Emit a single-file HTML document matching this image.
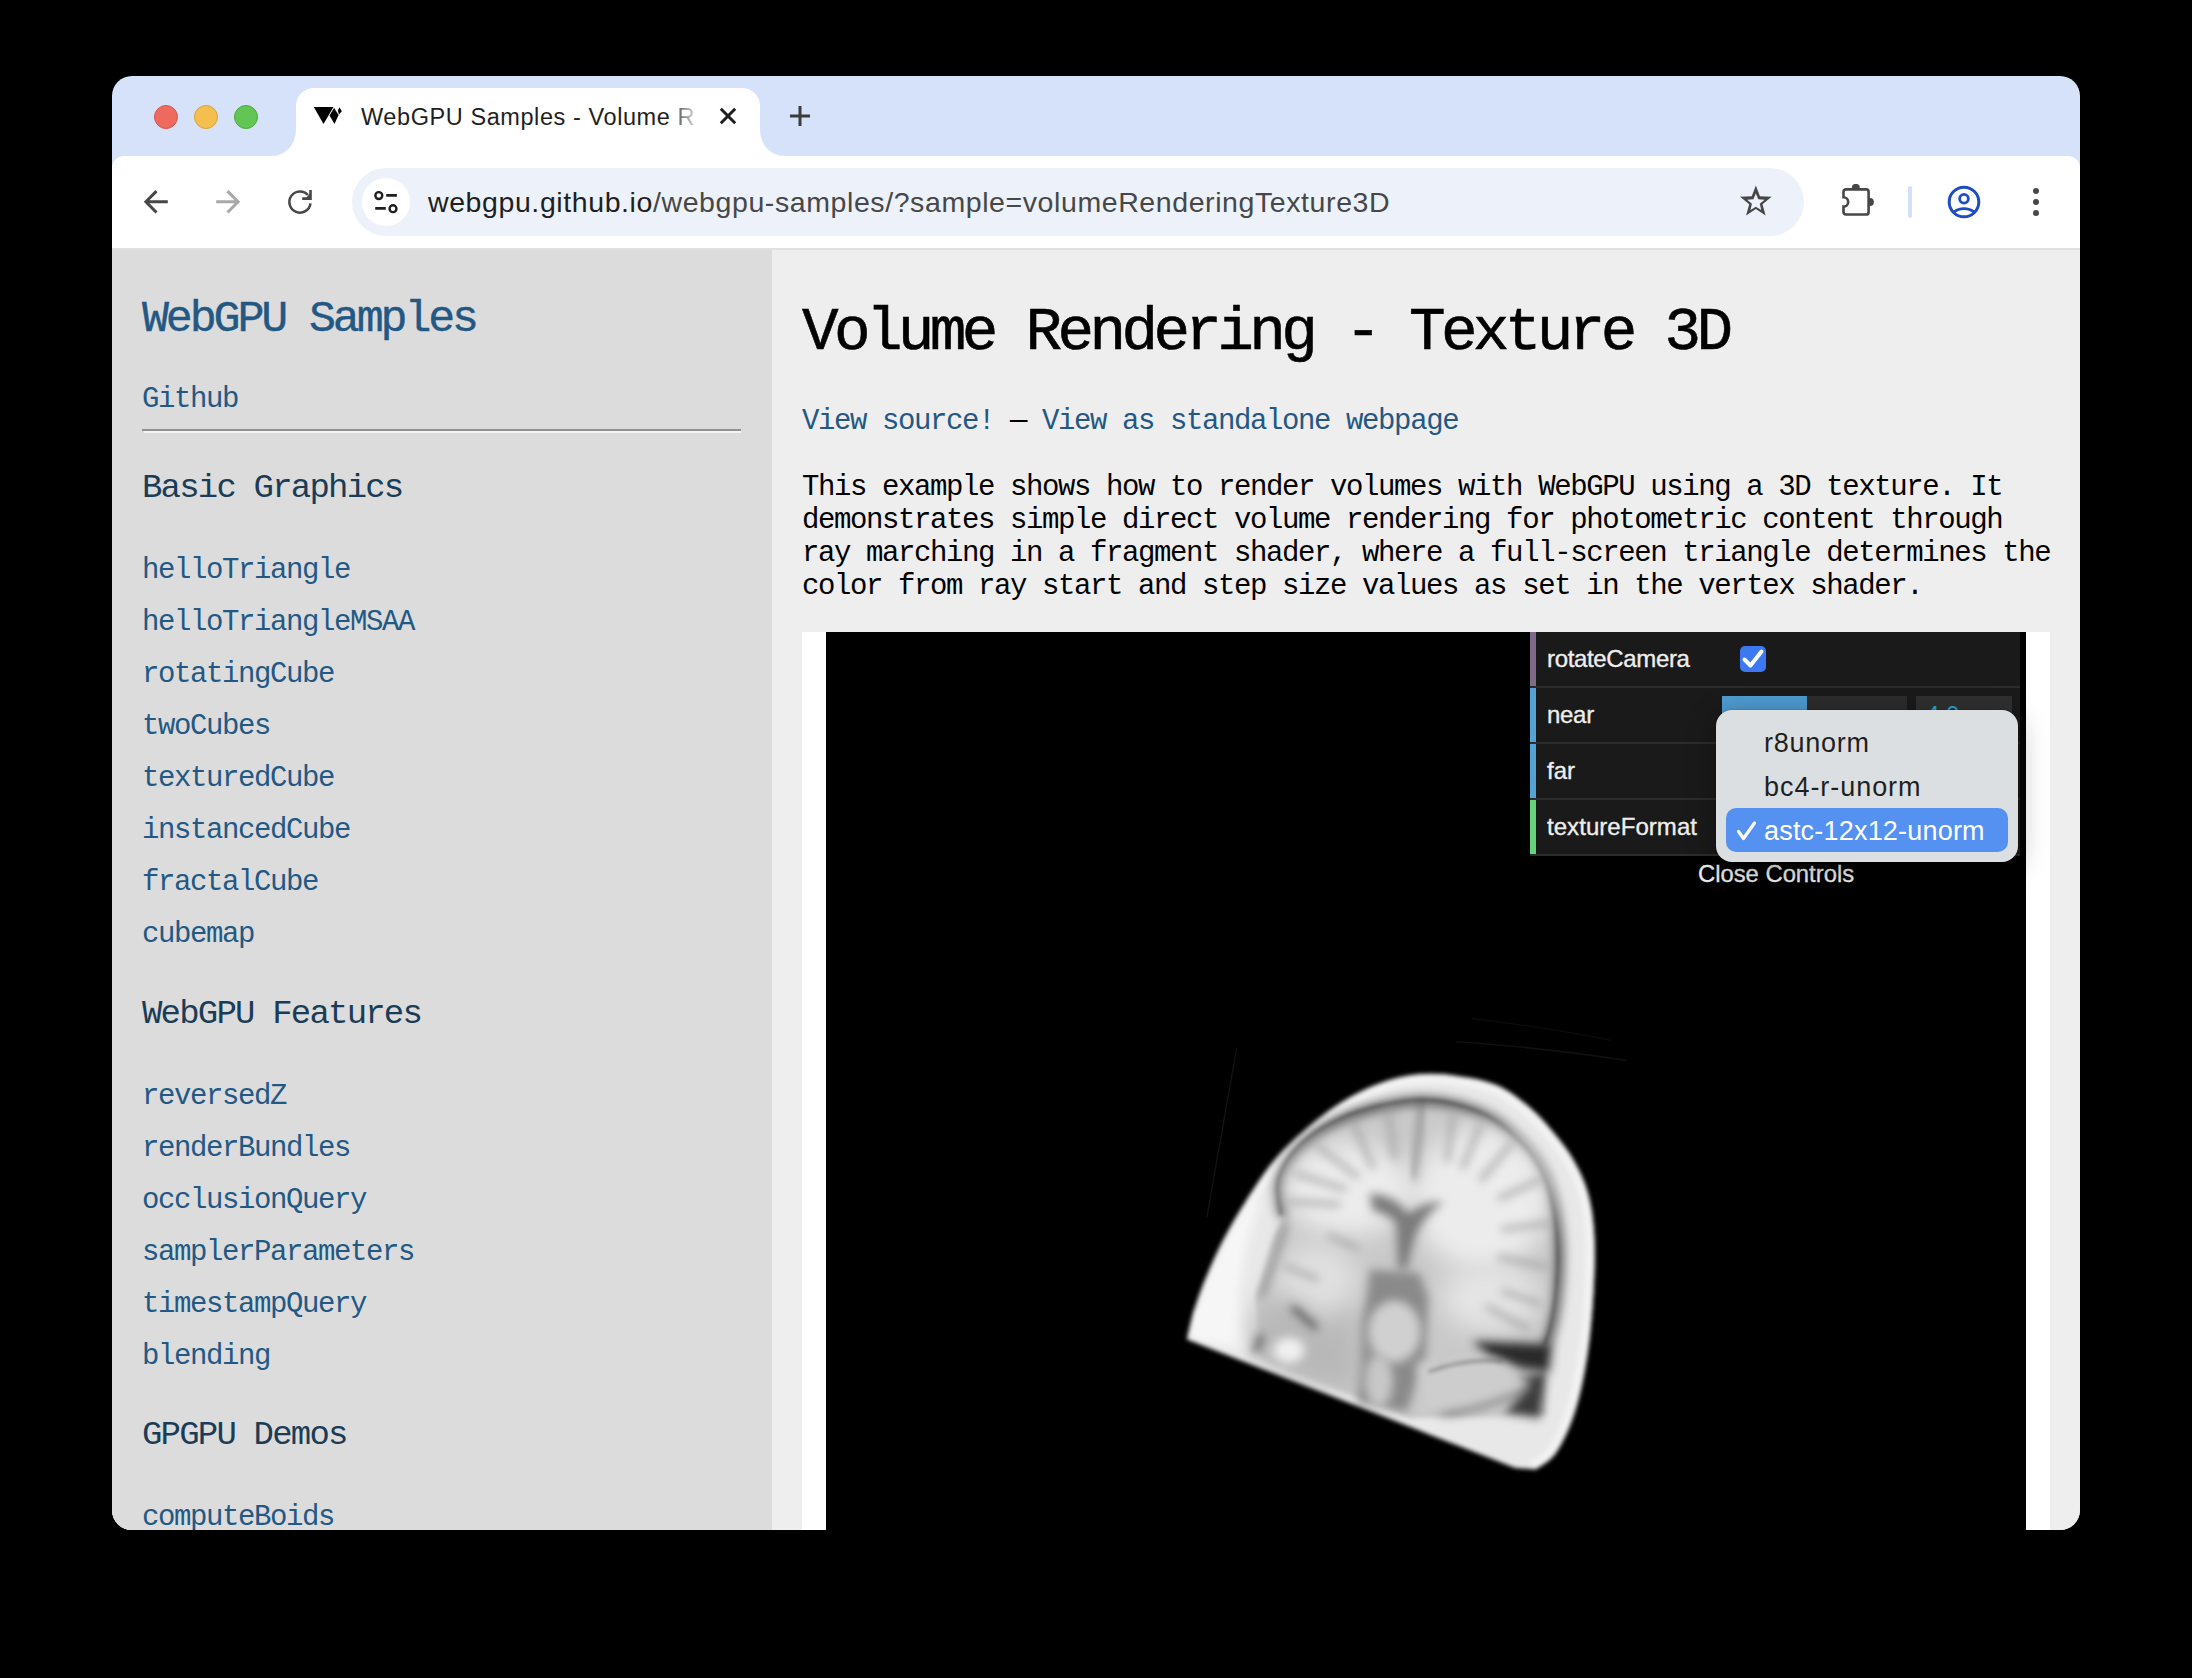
<!DOCTYPE html>
<html><head><meta charset="utf-8">
<style>
*{box-sizing:border-box;margin:0;padding:0}
html,body{width:2192px;height:1678px;background:#000;overflow:hidden;font-family:"Liberation Sans",sans-serif}
.abs{position:absolute}
#win{position:absolute;left:112px;top:76px;width:1968px;height:1454px;border-radius:20px;overflow:hidden;background:#d6e2fa}
.tl{position:absolute;top:29px;width:24px;height:24px;border-radius:50%}
#tab{position:absolute;left:184px;top:12px;width:464px;height:68px;background:#fff;border-radius:18px 18px 0 0}
.foot{position:absolute;top:64px;width:16px;height:16px;overflow:hidden}
#toolbar{position:absolute;left:0;top:80px;width:1968px;height:92px;background:#fff;border-radius:12px 12px 0 0}
#sep{position:absolute;left:0;top:172px;width:1968px;height:2px;background:#dfe1de}
#content{position:absolute;left:0;top:174px;width:1968px;height:1280px;background:#eee;overflow:hidden}
#side{position:absolute;left:0;top:0;width:660px;height:1280px;background:#dcdcdc}
.mono{font-family:"Liberation Mono",monospace}
.link{color:#235a88}
.t{position:absolute;white-space:nowrap}
</style></head><body>
<div id="win">
  <div class="tl" style="left:42px;background:#ee6a5f;border:1px solid #d9554a"></div>
  <div class="tl" style="left:82px;background:#f5bf4f;border:1px solid #d9a33a"></div>
  <div class="tl" style="left:122px;background:#62c554;border:1px solid #4ea83f"></div>
  <div id="tab"></div>
  <svg class="abs" style="left:200px;top:28px" width="34" height="24" viewBox="0 0 34 24">
    <polygon points="1.8,3.1 21.5,3.1 11.5,20" fill="#000"/>
    <polygon points="22.1,3.9 26.6,11.1 22.5,20 17.5,11.5" fill="#000"/>
    <polygon points="27.4,3.3 29.9,7.2 26.9,10.5 25.9,6.5" fill="#000"/>
  </svg>
  <div class="abs" style="left:249px;top:23.5px;width:333px;height:34px;overflow:hidden;white-space:nowrap;font-size:23.5px;letter-spacing:0.58px;color:#1f1f1f;line-height:34px">WebGPU Samples - Volume Rendering</div>
  <div class="abs" style="left:556px;top:20px;width:28px;height:40px;background:linear-gradient(90deg,rgba(255,255,255,0),rgba(255,255,255,0.85) 100%)"></div>
  <svg class="abs" style="left:600px;top:24px" width="32" height="32" viewBox="0 0 32 32"><path d="M8.8 8.8L23.2 23.2M23.2 8.8L8.8 23.2" stroke="#1f1f1f" stroke-width="3"/></svg>
  <svg class="abs" style="left:672px;top:24px" width="32" height="32" viewBox="0 0 32 32"><path d="M16 6V26M6 16H26" stroke="#3c3c3c" stroke-width="3"/></svg>

  <svg class="abs" style="left:160px;top:54px" width="24" height="26" viewBox="0 0 24 26"><path d="M24 0L24 26L0 26A24 26 0 0 0 24 0Z" fill="#fff"/></svg>
  <svg class="abs" style="left:648px;top:54px" width="24" height="26" viewBox="0 0 24 26"><path d="M0 0L0 26L24 26A24 26 0 0 1 0 0Z" fill="#fff"/></svg>
  <div id="toolbar"></div>
  <svg class="abs" style="left:26px;top:108px" width="36" height="36" viewBox="0 0 36 36"><path d="M29.8 17.8H9M18.5 7.1L7.9 17.8L18.5 28.5" fill="none" stroke="#474747" stroke-width="3"/></svg>
  <svg class="abs" style="left:98px;top:108px" width="36" height="36" viewBox="0 0 36 36"><path d="M6.2 17.8H27M17.5 7.1L28.1 17.8L17.5 28.5" fill="none" stroke="#a8a8a8" stroke-width="3"/></svg>
  <svg class="abs" style="left:170px;top:108px" width="36" height="36" viewBox="0 0 36 36"><path d="M26 11.05A10.6 10.6 0 1 0 28.5 19.3" fill="none" stroke="#474747" stroke-width="2.5"/><path d="M27.2 6H29.8V15.9H20.2V13.3H24.6L27.2 10.6Z" fill="#474747"/></svg>
  <div class="abs" style="left:240px;top:92px;width:1452px;height:68px;border-radius:34px;background:#edf2fa"></div>
  <div class="abs" style="left:250px;top:102px;width:48px;height:48px;border-radius:50%;background:#fff"></div>
  <svg class="abs" style="left:256px;top:108px" width="36" height="36" viewBox="0 0 36 36">
    <circle cx="10.8" cy="11.6" r="3.45" fill="none" stroke="#1f1f1f" stroke-width="2.4"/>
    <path d="M18.2 11.4H28.9" stroke="#1f1f1f" stroke-width="2.9"/>
    <circle cx="25" cy="24.7" r="3.45" fill="none" stroke="#1f1f1f" stroke-width="2.4"/>
    <path d="M7.2 24.4H17.8" stroke="#1f1f1f" stroke-width="2.9"/>
  </svg>
  <div class="abs" style="left:316px;top:108px;white-space:nowrap;font-size:28.5px;letter-spacing:0.59px;color:#1f1f1f;line-height:36px">webgpu.github.io<span style="color:#474747">/webgpu-samples/?sample=volumeRenderingTexture3D</span></div>
  <svg class="abs" style="left:1625px;top:107px" width="36" height="36" viewBox="0 0 36 36"><path fill-rule="evenodd" d="M18.85 2.40 L22.96 13.34 L34.64 13.87 L25.51 21.16 L28.61 32.43 L18.85 26.00 L9.09 32.43 L12.19 21.16 L3.06 13.87 L14.74 13.34Z M18.85 10.40 L21.26 16.28 L27.60 16.76 L22.75 20.87 L24.26 27.04 L18.85 23.70 L13.44 27.04 L14.95 20.87 L10.10 16.76 L16.44 16.28Z" fill="#474747"/></svg>
  <svg class="abs" style="left:1727px;top:108px" width="36" height="36" viewBox="0 0 36 36"><path d="M4.5 13.2V7.9Q4.5 5.4 7 5.4H27.1Q29.6 5.4 29.6 7.9V27.9Q29.6 30.5 27.1 30.5H7Q4.5 30.5 4.5 28V22.6A4.7 4.7 0 0 0 4.5 13.2Z" fill="none" stroke="#474747" stroke-width="2.6"/><path d="M12.9 5.4V3.8A3.95 3.95 0 0 1 20.8 3.8V5.4Z" fill="#474747"/><path d="M29.6 13.9H30.9A4 4 0 0 1 30.9 21.9H29.6Z" fill="#474747"/></svg>
  <div class="abs" style="left:1796px;top:110px;width:4px;height:32px;border-radius:2px;background:#d3e0fa"></div>
  <svg class="abs" style="left:1834px;top:108px" width="36" height="36" viewBox="0 0 36 36">
    <circle cx="18" cy="18" r="14.8" fill="none" stroke="#1d4cc3" stroke-width="3"/>
    <circle cx="18" cy="14.8" r="4.35" fill="none" stroke="#1d4cc3" stroke-width="2.8"/>
    <path d="M8 28A13.5 10 0 0 1 28 28" fill="none" stroke="#1d4cc3" stroke-width="2.8"/>
  </svg>
  <svg class="abs" style="left:1906px;top:108px" width="36" height="36" viewBox="0 0 36 36"><circle cx="18" cy="7" r="3" fill="#474747"/><circle cx="18" cy="18" r="3" fill="#474747"/><circle cx="18" cy="29" r="3" fill="#474747"/></svg>

  <div id="sep"></div>
  <div id="content">
    <div id="side"></div>
<!--CONTENT-->
<div class="t mono" style="left:30px;top:47.03px;font-size:45px;line-height:45px;letter-spacing:-3.15px;color:#245884;-webkit-text-stroke:0.4px #245884;">WebGPU Samples</div>
<div class="t mono" style="left:30px;top:134.78px;font-size:29px;line-height:29px;letter-spacing:-1.4px;color:#245884;">Github</div>
<div class="abs" style="left:30px;top:179px;width:599px;height:2px;background:#929292"></div>
<div class="abs" style="left:32px;top:181px;width:597px;height:2px;background:#f4f4f4"></div>
<div class="t mono" style="left:30px;top:220.95px;font-size:34px;line-height:34px;letter-spacing:-1.8px;color:#1b3c56;">Basic Graphics</div>
<div class="t mono" style="left:30px;top:305.78px;font-size:29px;line-height:29px;letter-spacing:-1.4px;color:#245884;">helloTriangle</div>
<div class="t mono" style="left:30px;top:357.78px;font-size:29px;line-height:29px;letter-spacing:-1.4px;color:#245884;">helloTriangleMSAA</div>
<div class="t mono" style="left:30px;top:409.78px;font-size:29px;line-height:29px;letter-spacing:-1.4px;color:#245884;">rotatingCube</div>
<div class="t mono" style="left:30px;top:461.78px;font-size:29px;line-height:29px;letter-spacing:-1.4px;color:#245884;">twoCubes</div>
<div class="t mono" style="left:30px;top:513.78px;font-size:29px;line-height:29px;letter-spacing:-1.4px;color:#245884;">texturedCube</div>
<div class="t mono" style="left:30px;top:565.78px;font-size:29px;line-height:29px;letter-spacing:-1.4px;color:#245884;">instancedCube</div>
<div class="t mono" style="left:30px;top:617.78px;font-size:29px;line-height:29px;letter-spacing:-1.4px;color:#245884;">fractalCube</div>
<div class="t mono" style="left:30px;top:669.78px;font-size:29px;line-height:29px;letter-spacing:-1.4px;color:#245884;">cubemap</div>
<div class="t mono" style="left:30px;top:746.95px;font-size:34px;line-height:34px;letter-spacing:-1.8px;color:#1b3c56;">WebGPU Features</div>
<div class="t mono" style="left:30px;top:831.78px;font-size:29px;line-height:29px;letter-spacing:-1.4px;color:#245884;">reversedZ</div>
<div class="t mono" style="left:30px;top:883.78px;font-size:29px;line-height:29px;letter-spacing:-1.4px;color:#245884;">renderBundles</div>
<div class="t mono" style="left:30px;top:935.78px;font-size:29px;line-height:29px;letter-spacing:-1.4px;color:#245884;">occlusionQuery</div>
<div class="t mono" style="left:30px;top:987.78px;font-size:29px;line-height:29px;letter-spacing:-1.4px;color:#245884;">samplerParameters</div>
<div class="t mono" style="left:30px;top:1039.78px;font-size:29px;line-height:29px;letter-spacing:-1.4px;color:#245884;">timestampQuery</div>
<div class="t mono" style="left:30px;top:1091.78px;font-size:29px;line-height:29px;letter-spacing:-1.4px;color:#245884;">blending</div>
<div class="t mono" style="left:30px;top:1167.95px;font-size:34px;line-height:34px;letter-spacing:-1.8px;color:#1b3c56;">GPGPU Demos</div>
<div class="t mono" style="left:30px;top:1252.78px;font-size:29px;line-height:29px;letter-spacing:-1.4px;color:#245884;">computeBoids</div>
<div class="t mono" style="left:690px;top:52.27px;font-size:61px;line-height:61px;letter-spacing:-4.66px;color:#000;-webkit-text-stroke:0.6px #000;">Volume Rendering - Texture 3D</div>
<div class="t mono" style="left:690px;top:157.28px;font-size:29px;line-height:29px;letter-spacing:-1.4px;color:#000;"><span style="color:#245884">View source!</span> — <span style="color:#245884">View as standalone webpage</span></div>
<div class="t mono" style="left:690px;top:222.78px;font-size:29px;line-height:29px;letter-spacing:-1.4px;color:#000;">This example shows how to render volumes with WebGPU using a 3D texture. It</div>
<div class="t mono" style="left:690px;top:255.78px;font-size:29px;line-height:29px;letter-spacing:-1.4px;color:#000;">demonstrates simple direct volume rendering for photometric content through</div>
<div class="t mono" style="left:690px;top:288.78px;font-size:29px;line-height:29px;letter-spacing:-1.4px;color:#000;">ray marching in a fragment shader, where a full-screen triangle determines the</div>
<div class="t mono" style="left:690px;top:321.78px;font-size:29px;line-height:29px;letter-spacing:-1.4px;color:#000;">color from ray start and step size values as set in the vertex shader.</div>
<div class="abs" style="left:690px;top:382px;width:1248px;height:898px;background:#fff"></div>
<div class="abs" style="left:714px;top:382px;width:1200px;height:898px;background:#000"></div>
<div class="abs" style="left:1418px;top:382px;width:490px;height:54px;background:#1a1a1a"></div>
<div class="abs" style="left:1418px;top:436px;width:490px;height:2px;background:#2c2c2c"></div>
<div class="abs" style="left:1418px;top:382px;width:6px;height:54px;background:#806a8a"></div>
<div class="abs" style="left:1418px;top:438px;width:490px;height:54px;background:#1a1a1a"></div>
<div class="abs" style="left:1418px;top:492px;width:490px;height:2px;background:#2c2c2c"></div>
<div class="abs" style="left:1418px;top:438px;width:6px;height:54px;background:#55a2d6"></div>
<div class="abs" style="left:1418px;top:494px;width:490px;height:54px;background:#1a1a1a"></div>
<div class="abs" style="left:1418px;top:548px;width:490px;height:2px;background:#2c2c2c"></div>
<div class="abs" style="left:1418px;top:494px;width:6px;height:54px;background:#55a2d6"></div>
<div class="abs" style="left:1418px;top:550px;width:490px;height:54px;background:#1a1a1a"></div>
<div class="abs" style="left:1418px;top:604px;width:490px;height:2px;background:#2c2c2c"></div>
<div class="abs" style="left:1418px;top:550px;width:6px;height:54px;background:#66d27b"></div>
<div class="t" style="left:1435px;top:396.88px;font-size:24px;line-height:24px;letter-spacing:-0.35px;color:#eee;-webkit-text-stroke:0.35px #eee;">rotateCamera</div>
<div class="t" style="left:1435px;top:452.98px;font-size:24px;line-height:24px;letter-spacing:-0.3px;color:#eee;-webkit-text-stroke:0.35px #eee;">near</div>
<div class="t" style="left:1435px;top:508.68px;font-size:24px;line-height:24px;letter-spacing:0px;color:#eee;-webkit-text-stroke:0.35px #eee;">far</div>
<div class="t" style="left:1435px;top:565.18px;font-size:24px;line-height:24px;letter-spacing:0.05px;color:#eee;-webkit-text-stroke:0.35px #eee;">textureFormat</div>
<div class="abs" style="left:1628px;top:396px;width:26px;height:26px;background:#3b78f2;border-radius:5px"></div>
<svg class="abs" style="left:1628px;top:396px" width="26" height="26" viewBox="0 0 26 26"><path d="M4.5 13.5L10.5 19.5L21.5 5.5" fill="none" stroke="#fff" stroke-width="4" stroke-linecap="round" stroke-linejoin="round"/></svg>
<div class="abs" style="left:1610px;top:446px;width:185px;height:50px;background:#2c2c2c"></div>
<div class="abs" style="left:1610px;top:446px;width:85px;height:50px;background:#4e9bd0"></div>
<div class="abs" style="left:1804px;top:446px;width:96px;height:50px;background:#303030"></div>
<div class="t" style="left:1814px;top:453.18px;font-size:24px;line-height:24px;letter-spacing:0px;color:#2fa1d6;">4.0</div>
<div class="t" style="left:1586px;top:612.45px;font-size:23.8px;line-height:23.8px;letter-spacing:0px;color:#eee;-webkit-text-stroke:0.3px #eee;">Close Controls</div>
<div class="abs" style="left:1604px;top:460px;width:302px;height:152px;background:#dcdfe2;border-radius:16px;box-shadow:0 6px 28px rgba(0,0,0,0.35), 0 0 0 1px rgba(0,0,0,0.08)"></div>
<div class="abs" style="left:1614px;top:558px;width:282px;height:44px;background:#5591f0;border-radius:10px"></div>
<div class="t" style="left:1652px;top:480.14px;font-size:27px;line-height:27px;letter-spacing:0.75px;color:#1f1f1f;">r8unorm</div>
<div class="t" style="left:1652px;top:524.14px;font-size:27px;line-height:27px;letter-spacing:0.95px;color:#1f1f1f;">bc4-r-unorm</div>
<div class="t" style="left:1652px;top:568.14px;font-size:27px;line-height:27px;letter-spacing:0.2px;color:#fff;">astc-12x12-unorm</div>
<svg class="abs" style="left:1622px;top:568px" width="26" height="26" viewBox="0 0 26 26"><path d="M4.5 13.5L9.5 20.5L20.5 5" fill="none" stroke="#fff" stroke-width="3.2" stroke-linecap="round" stroke-linejoin="round"/></svg>
<svg class="abs" style="left:988px;top:750px" width="560" height="520" viewBox="0 0 1807 1678">
<defs>
<filter id="b1" x="-5%" y="-5%" width="110%" height="110%"><feGaussianBlur stdDeviation="7"/></filter>
<filter id="b2" x="-30%" y="-30%" width="160%" height="160%"><feGaussianBlur stdDeviation="14"/></filter>
<filter id="b3" x="-50%" y="-50%" width="200%" height="200%"><feGaussianBlur stdDeviation="40"/></filter>
<clipPath id="hc"><path d="M280 1095 L300 1010 C307 992 323 940 340 900 C357 860 378 812 400 770 C422 728 443 692 470 650 C497 608 528 558 560 520 C592 482 623 452 660 420 C697 388 740 355 780 330 C820 305 858 285 900 270 C942 255 988 244 1030 240 C1072 236 1108 239 1150 245 C1192 251 1241 258 1280 275 C1319 292 1354 319 1385 345 C1416 371 1441 401 1465 430 C1489 459 1512 488 1530 520 C1548 552 1564 585 1575 625 C1586 665 1592 706 1595 760 C1598 814 1596 885 1592 950 C1588 1015 1582 1087 1572 1150 C1562 1213 1549 1278 1532 1330 C1515 1382 1493 1429 1472 1460 C1451 1491 1416 1506 1405 1515 L1340 1510 Z"/></clipPath>
</defs>
<g filter="url(#b1)">
<path d="M280 1095 L300 1010 C307 992 323 940 340 900 C357 860 378 812 400 770 C422 728 443 692 470 650 C497 608 528 558 560 520 C592 482 623 452 660 420 C697 388 740 355 780 330 C820 305 858 285 900 270 C942 255 988 244 1030 240 C1072 236 1108 239 1150 245 C1192 251 1241 258 1280 275 C1319 292 1354 319 1385 345 C1416 371 1441 401 1465 430 C1489 459 1512 488 1530 520 C1548 552 1564 585 1575 625 C1586 665 1592 706 1595 760 C1598 814 1596 885 1592 950 C1588 1015 1582 1087 1572 1150 C1562 1213 1549 1278 1532 1330 C1515 1382 1493 1429 1472 1460 C1451 1491 1416 1506 1405 1515 L1340 1510 Z" fill="#e8e8e8"/>
<g clip-path="url(#hc)">
<path d="M470 650 C485 628 528 558 560 520 C592 482 623 452 660 420 C697 388 740 355 780 330 C820 305 858 285 900 270 C942 255 988 244 1030 240 C1072 236 1108 239 1150 245 C1192 251 1241 258 1280 275 C1319 292 1354 319 1385 345 C1416 371 1441 401 1465 430 C1489 459 1512 488 1530 520 C1548 552 1564 585 1575 625 C1586 665 1592 706 1595 760 C1598 814 1596 885 1592 950 C1588 1015 1582 1087 1572 1150 C1562 1213 1549 1278 1532 1330 C1515 1382 1493 1429 1472 1460 C1451 1491 1416 1506 1405 1515" fill="none" stroke="#f2f2f2" stroke-width="60"/>
<polygon points="280,1095 300,1010 340,900 400,770 470,650 520,640 470,800 450,950 460,1130" fill="#f6f6f6" filter="url(#b2)"/>
<path d="M590 700 C588 683 575 630 578 600 C581 570 593 546 610 520 C627 494 652 468 680 445 C708 422 743 402 780 385 C817 368 858 355 900 345 C942 335 988 326 1030 325 C1072 324 1110 328 1150 338 C1190 348 1233 363 1270 385 C1307 407 1343 442 1370 470 C1397 498 1414 523 1430 555 C1446 587 1456 619 1465 660 C1474 701 1480 752 1482 800 C1484 848 1480 908 1476 950 C1472 992 1466 1022 1460 1050 C1454 1078 1443 1104 1440 1115 L1440 1340 L1000 1350 L520 1160 L500 960 L560 760 Z" fill="#c9c9c9"/>
<path d="M590 700 C588 683 575 630 578 600 C581 570 593 546 610 520 C627 494 652 468 680 445 C708 422 743 402 780 385 C817 368 858 355 900 345 C942 335 988 326 1030 325 C1072 324 1110 328 1150 338 C1190 348 1233 363 1270 385 C1307 407 1343 442 1370 470 C1397 498 1414 523 1430 555 C1446 587 1456 619 1465 660 C1474 701 1480 752 1482 800 C1484 848 1480 908 1476 950 C1472 992 1466 1022 1460 1050 C1454 1078 1443 1104 1440 1115" fill="none" stroke="#666" stroke-width="34" filter="url(#b2)"/>
<path d="M590 700 C588 683 575 630 578 600 C581 570 593 546 610 520 C627 494 652 468 680 445 C708 422 743 402 780 385 C817 368 858 355 900 345 C942 335 988 326 1030 325 C1072 324 1110 328 1150 338 C1190 348 1233 363 1270 385 C1307 407 1343 442 1370 470 C1397 498 1414 523 1430 555 C1446 587 1456 619 1465 660 C1474 701 1480 752 1482 800 C1484 848 1480 908 1476 950 C1472 992 1466 1022 1460 1050 C1454 1078 1443 1104 1440 1115" fill="none" stroke="#262626" stroke-width="7" transform="translate(-6,-4)"/>
<ellipse cx="800" cy="610" rx="210" ry="150" fill="#ececec" filter="url(#b3)"/>
<ellipse cx="1230" cy="640" rx="220" ry="230" fill="#ececec" filter="url(#b3)"/>
<ellipse cx="1260" cy="960" rx="160" ry="110" fill="#e4e4e4" filter="url(#b3)"/>
<ellipse cx="700" cy="900" rx="130" ry="110" fill="#e0e0e0" filter="url(#b3)"/>
<g filter="url(#b2)"><path d="M700 470 L830 570" stroke="#9c9c9c" stroke-width="14" stroke-linecap="round"/><path d="M630 560 L790 610" stroke="#9c9c9c" stroke-width="14" stroke-linecap="round"/><path d="M610 650 L770 660" stroke="#9c9c9c" stroke-width="14" stroke-linecap="round"/><path d="M820 400 L880 540" stroke="#9c9c9c" stroke-width="14" stroke-linecap="round"/><path d="M930 360 L950 510" stroke="#9c9c9c" stroke-width="14" stroke-linecap="round"/><path d="M1140 370 L1120 520" stroke="#9c9c9c" stroke-width="14" stroke-linecap="round"/><path d="M1230 400 L1170 540" stroke="#9c9c9c" stroke-width="14" stroke-linecap="round"/><path d="M1330 460 L1230 580" stroke="#9c9c9c" stroke-width="14" stroke-linecap="round"/><path d="M1420 580 L1290 640" stroke="#9c9c9c" stroke-width="14" stroke-linecap="round"/><path d="M1450 720 L1300 740" stroke="#9c9c9c" stroke-width="14" stroke-linecap="round"/><path d="M1440 860 L1290 830" stroke="#9c9c9c" stroke-width="14" stroke-linecap="round"/><path d="M1420 980 L1300 940" stroke="#9c9c9c" stroke-width="14" stroke-linecap="round"/><path d="M1380 1060 L1250 990" stroke="#9c9c9c" stroke-width="14" stroke-linecap="round"/><path d="M740 760 L830 800" stroke="#9c9c9c" stroke-width="14" stroke-linecap="round"/><path d="M600 860 L700 900" stroke="#9c9c9c" stroke-width="14" stroke-linecap="round"/><path d="M1200 1200 L1150 1330" stroke="#9c9c9c" stroke-width="14" stroke-linecap="round"/><path d="M1300 1220 L1240 1320" stroke="#9c9c9c" stroke-width="14" stroke-linecap="round"/><path d="M1100 1180 L1080 1320" stroke="#9c9c9c" stroke-width="14" stroke-linecap="round"/></g>
<path d="M1040 320 Q1030 450 1010 580" stroke="#555" stroke-width="10" fill="none" filter="url(#b2)"/>
<path d="M870 625 Q950 625 995 690 Q1040 650 1110 650 Q1040 700 1015 770 L990 870 L962 870 L955 720 Q930 690 880 680 Z" fill="#7a7a7a" filter="url(#b2)"/>
<path d="M600 720 Q560 850 520 960" stroke="#777" stroke-width="14" fill="none" filter="url(#b2)"/>
<polygon points="870,870 1030,880 1060,960 1050,1150 990,1330 830,1300 840,1050 860,960" fill="#8a8a8a" filter="url(#b2)"/>
<ellipse cx="950" cy="1070" rx="85" ry="100" fill="#d0d0d0" filter="url(#b2)"/>
<ellipse cx="900" cy="1230" rx="45" ry="85" fill="#c8c8c8" filter="url(#b2)"/>
<polygon points="1200,1100 1460,1110 1450,1200 1360,1190 1260,1150" fill="#2a2a2a" filter="url(#b2)"/>
<polygon points="1280,1240 1440,1200 1420,1350 1300,1330" fill="#3a3a3a" filter="url(#b2)"/>
<polygon points="1020,1170 1280,1160 1390,1240 1300,1340 1050,1330" fill="#cdcdcd" filter="url(#b2)"/>
<path d="M1060 1200 Q1200 1150 1300 1170" stroke="#6a6a6a" stroke-width="8" fill="none"/>
<path d="M1100 1340 Q1250 1320 1390 1250" stroke="#4a4a4a" stroke-width="10" fill="none" filter="url(#b2)"/>
<polygon points="500,1000 620,960 720,1060 820,1000 840,1250 700,1240 560,1190 490,1120" fill="#b8b8b8" filter="url(#b3)"/>
<path d="M620 990 L700 1060 M520 1080 L500 1140" stroke="#3a3a3a" stroke-width="16" fill="none" filter="url(#b2)"/>
<ellipse cx="610" cy="1130" rx="50" ry="40" fill="#f0f0f0" filter="url(#b2)"/>
<ellipse cx="1120" cy="1400" rx="80" ry="30" fill="#e8e8e8" filter="url(#b2)"/>
</g>
</g>
<path d="M440 160 L345 700" stroke="#141414" stroke-width="4" fill="none"/>
<path d="M1150 135 Q1400 150 1700 195" stroke="#101010" stroke-width="5" fill="none"/><path d="M1200 60 Q1450 90 1650 130" stroke="#0c0c0c" stroke-width="4" fill="none"/>
</svg>
<!--/CONTENT-->
  </div>
</div>
</body></html>
